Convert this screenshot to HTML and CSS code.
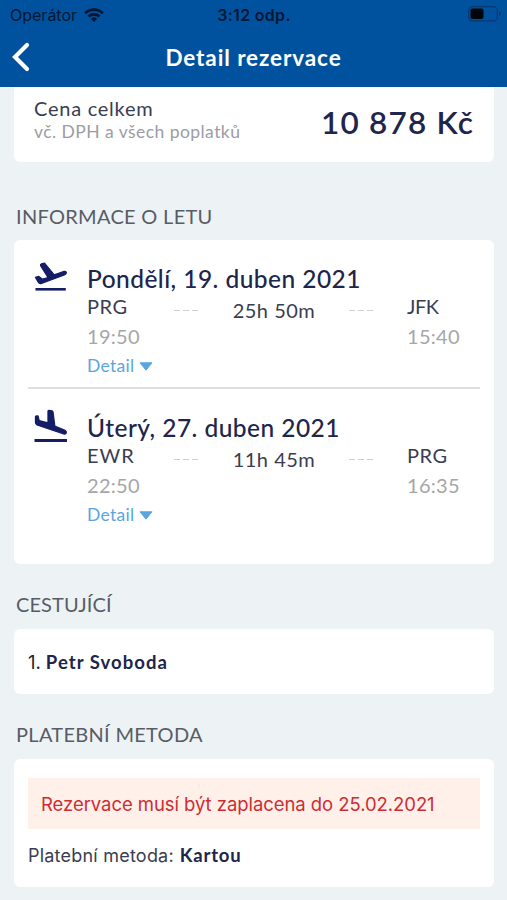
FILE: index.html
```html
<!DOCTYPE html>
<html lang="cs">
<head>
<meta charset="utf-8">
<title>Detail rezervace</title>
<link rel="stylesheet" href="styles.css">
</head>
<body>
<header class="header">
  <div class="status">
    <div class="carrier"><span>Operátor</span>
      <svg class="wifi" viewBox="0 0 20 14"><path d="M1.2 5.2a12.4 12.4 0 0 1 17.6 0M4.5 8.5a7.8 7.8 0 0 1 11 0" fill="none" stroke="currentColor" stroke-width="2.8"/><path d="M10 13.9 6.9 10.8a4.5 4.5 0 0 1 6.2 0Z" fill="currentColor"/></svg>
    </div>
    <div class="clock">3:12 odp.</div>
    <svg class="battery" viewBox="0 0 34 16"><rect x=".7" y=".7" width="28.6" height="14.2" rx="4" fill="none" stroke="#07386f" stroke-width="1.2"/><rect x="2.5" y="2.5" width="13" height="10.5" rx="2" fill="#02060c"/><path d="M31 5.5q2 .6 2 2.3T31 10Z" fill="#07386f"/></svg>
  </div>
  <div class="nav">
    <svg class="back" viewBox="0 0 18 30"><path d="M15 3 3 15l12 12" fill="none" stroke="#fff" stroke-width="4.2" stroke-linecap="round" stroke-linejoin="miter"/></svg>
    <h1 class="title">Detail rezervace</h1>
  </div>
</header>
<main class="content">
  <section class="card price-card">
    <div><div class="price-label">Cena celkem</div><div class="price-note">vč. DPH a všech poplatků</div></div>
    <div class="price">10 878 Kč</div>
  </section>

  <h2 class="heading heading-flight">INFORMACE O LETU</h2>
  <section class="card flights">
    <article class="flight">
      <svg class="plane" viewBox="0 0 34 30"><g fill="#151d66" stroke="#151d66"><path d="M1.5 15.4 4.6 14.4 8.5 17.2 14 15.5 6.6 3.6Q6.2 2.3 7.5 1.8L10.5 1.2 20.2 12.8 29.6 9.5Q32 9 32.3 10.5 32.5 12 30.3 13L7.5 21.3Q5.4 22 4.3 20.2Z" stroke-width="1.3" stroke-linejoin="round"/><path d="M1.5 27.3h30.3" stroke-width="2.6"/></g></svg>
      <div class="flight-body">
        <h3 class="date">Pondělí, 19. duben 2021</h3>
        <div class="route">
          <div class="stop"><div class="code">PRG</div><div class="time">19:50</div></div>
          <div class="dashes"><i></i><i></i><i></i></div>
          <div class="duration">25h 50m</div>
          <div class="dashes"><i></i><i></i><i></i></div>
          <div class="stop"><div class="code code-jfk">JFK</div><div class="time">15:40</div></div>
        </div>
        <div class="detail"><span>Detail</span><svg class="caret" viewBox="0 0 14 9"><path d="M1 .8h12L7 8.2Z" fill="#5ba5df" stroke="#5ba5df" stroke-linejoin="round"/></svg></div>
      </div>
    </article>
    <article class="flight flight-return">
      <svg class="plane" viewBox="0 0 34 34"><g fill="#151d66" stroke="#151d66"><path d="M1.5 8.2Q1.3 7 2.7 7H4L5.2 11.6 14 14V2.6Q14 1.1 15.4 1.3L17.9 1.8Q18.9 2 19 3L20.8 17.2 31 21.3Q32.7 22.2 32.3 23.8 31.8 25.4 29.7 24.8L3 15.9Q1.5 15.3 1.5 13.2Z" stroke-width="1.3" stroke-linejoin="round"/><path d="M.5 31.5h32.5" stroke-width="2.8"/></g></svg>
      <div class="flight-body">
        <h3 class="date">Úterý, 27. duben 2021</h3>
        <div class="route">
          <div class="stop"><div class="code code-ewr">EWR</div><div class="time">22:50</div></div>
          <div class="dashes"><i></i><i></i><i></i></div>
          <div class="duration">11h 45m</div>
          <div class="dashes"><i></i><i></i><i></i></div>
          <div class="stop"><div class="code">PRG</div><div class="time">16:35</div></div>
        </div>
        <div class="detail"><span>Detail</span><svg class="caret" viewBox="0 0 14 9"><path d="M1 .8h12L7 8.2Z" fill="#5ba5df" stroke="#5ba5df" stroke-linejoin="round"/></svg></div>
      </div>
    </article>
  </section>

  <h2 class="heading heading-passengers">CESTUJÍCÍ</h2>
  <section class="card passenger"><span class="number">1.</span><span class="name">Petr Svoboda</span></section>

  <h2 class="heading">PLATEBNÍ METODA</h2>
  <section class="card payment">
    <div class="alert">Rezervace musí být zaplacena do 25.02.2021</div>
    <div class="method"><span class="method-label">Platební metoda:</span><strong class="method-name">Kartou</strong></div>
  </section>
</main>
</body>
</html>
```
FILE: styles.css
```css
* { box-sizing: border-box; }
body {
  margin: 0;
  height: 900px;
  overflow: hidden;
  background: #edf2f5;
  font-family: Lato, "Open Sans", sans-serif;
  color: #3a3d50;
}
h1, h2, h3 { margin: 0; font-weight: 400; }
svg { display: block; flex: none; }
.header { height: 87px; background: #00529f; }
.status {
  height: 29px;
  padding: 0 9px 0 10px;
  display: grid;
  grid-template-columns: 1fr auto 1fr;
  align-items: center;
  font-family: Inter, sans-serif;
  font-size: 16px;
  color: #031731;
}
.carrier { display: flex; align-items: center; gap: 7px; }
.wifi { width: 20px; height: 14px; }
.clock { font-weight: 600; letter-spacing: .3px; }
.battery { width: 34px; height: 16px; justify-self: end; margin: -2px -4px 0 0; }
.nav {
  height: 56px;
  padding: 0 12px;
  display: grid;
  grid-template-columns: 18px 1fr 18px;
  align-items: center;
}
.back { width: 18px; height: 30px; }
.title { text-align: center; color: #fff; font-size: 22.5px; font-weight: 700; letter-spacing: .9px; }
.content { padding: 0 13px 0 14px; }
.card { background: #fff; border-radius: 6px; }
.price-card {
  height: 75px;
  padding: 9px 20px 0 20px;
  display: flex;
  justify-content: space-between;
  border-radius: 0 0 6px 6px;
}
.price-label { font-size: 20px; line-height: 24px; letter-spacing: .75px; }
.price-note { font-size: 17.5px; line-height: 24px; letter-spacing: .45px; color: #9c9ca4; }
.price { font-size: 31.5px; line-height: 53px; font-weight: 600; letter-spacing: 1.2px; color: #20254b; }
.heading {
  height: 65px;
  padding: 27px 2px 0;
  font-size: 20px;
  line-height: 26px;
  letter-spacing: .3px;
  color: #575d66;
}
.heading-flight { height: 78px; padding-top: 41px; }
.heading-passengers { letter-spacing: .1px; }
.flights { height: 324px; padding: 0 14px; }
.flight { height: 149px; padding: 22px 0 0 6px; display: flex; gap: 19px; border-bottom: 2px solid #dedfe2; }
.flight-return { border-bottom: 0; }
.plane { width: 34px; height: 30px; }
.flight-return .plane { height: 34px; margin-top: -2px; }
.flight-body { width: 374px; }
.date { font-size: 24.5px; line-height: 34px; font-weight: 500; letter-spacing: .45px; color: #20254b; white-space: nowrap; }
.route { display: grid; grid-template-columns: 82px 34px 142px 32px 1fr; margin-top: -1px; }
.stop:last-child { padding-left: 30px; }
.code { font-size: 20px; line-height: 23px; letter-spacing: .6px; }
.code-jfk { letter-spacing: -.5px; }
.code-ewr { letter-spacing: 1px; }
.time { font-size: 20px; line-height: 36px; letter-spacing: .3px; color: #a6a6a8; }
.dashes { height: 30px; display: flex; align-items: center; justify-content: center; gap: 3px; }
.dashes i { width: 6px; height: 1px; background: #d0d0d3; }
.duration { font-size: 20px; line-height: 31px; letter-spacing: .5px; text-align: center; white-space: nowrap; }
.detail { display: flex; align-items: center; gap: 5px; height: 22px; font-size: 17.5px; letter-spacing: .3px; color: #5ba5df; }
.caret { width: 14px; height: 9px; margin-top: 2px; }
.passenger { height: 65px; padding: 0 14px; display: flex; align-items: center; gap: 5px; }
.number { font-family: Inter, sans-serif; font-size: 18.5px; color: #20222e; }
.name { font-size: 18.5px; font-weight: 700; letter-spacing: 1.05px; padding-top: 1px; color: #20254b; }
.payment { height: 128px; padding: 19px 14px 0; }
.alert {
  height: 51px;
  padding: 1px 13px 0;
  line-height: 51px;
  background: #fff0ea;
  color: #cf2c32;
  font-family: Inter, sans-serif;
  font-size: 18.5px;
  letter-spacing: -.06px;
  white-space: nowrap;
}
.method { display: flex; gap: 6px; line-height: 53px; font-family: Inter, sans-serif; font-size: 18px; }
.method-label { letter-spacing: .22px; }
.method-name { font-family: Lato, sans-serif; font-size: 18.5px; letter-spacing: .8px; color: #20254b; }
```
